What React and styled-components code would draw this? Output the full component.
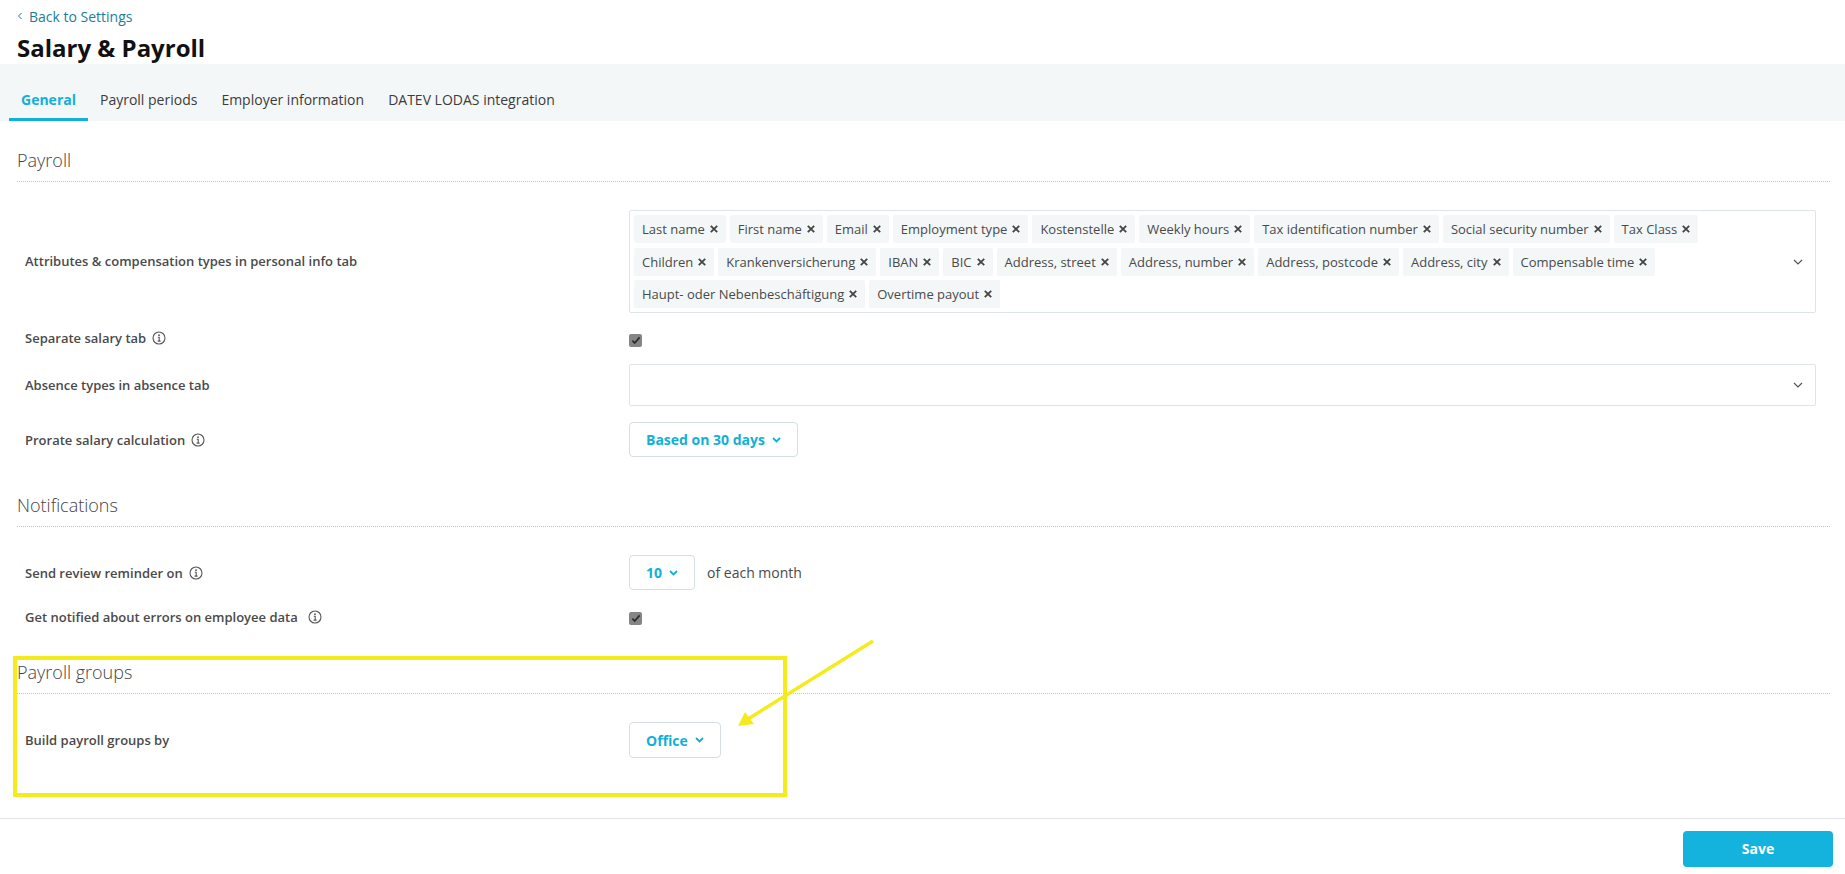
import React from "react";
import styled, { createGlobalStyle } from "styled-components";

const Global = createGlobalStyle`
  html, body { margin: 0; padding: 0; background: #fff; }
  body { font-family: "Open Sans", "Liberation Sans", sans-serif; color: #4a4a4a; }
  * { box-sizing: border-box; }
`;

const Page = styled.div`
  position: relative;
  height: 874px;
  display: flex;
  flex-direction: column;
  overflow: hidden;
`;
const BackLink = styled.a`
  height: 32px;
  padding-left: 17px;
  display: flex;
  align-items: center;
  gap: 6px;
  font-size: 14px;
  color: #1c7d9c;
`;
const Title = styled.h1`
  margin: 0;
  height: 32px;
  padding-left: 17px;
  font-size: 24px;
  line-height: 32px;
  font-weight: 700;
  color: #111;
`;
const TabBand = styled.div`
  height: 57px;
  background: #f3f7f8;
  padding: 15px 0 0 9px;
  display: flex;
`;
const Tab = styled.div`
  height: 42px;
  padding: 1px 12px 0;
  display: flex;
  align-items: center;
  font-size: 14px;
  font-weight: ${(p) => (p.$active ? 700 : 400)};
  color: ${(p) => (p.$active ? "#13afd8" : "#3c3c3c")};
  border-bottom: 3px solid ${(p) => (p.$active ? "#13afd8" : "transparent")};
`;
const SectionHeading = styled.h2`
  margin: ${(p) => p.$top}px 15px 0 17px;
  height: 42px;
  padding-bottom: 1px;
  display: flex;
  align-items: center;
  font-size: 18px;
  font-weight: 300;
  color: #444;
  border-bottom: 1px dotted #c4c4c4;
`;
const Rows = styled.div`
  margin-top: 28px;
  padding-left: 25px;
  padding-right: 29px;
  display: flex;
  flex-direction: column;
  gap: 16px;
`;
const Row = styled.div`
  display: grid;
  grid-template-columns: 604px 1fr;
  align-items: center;
  min-height: ${(p) => p.$h || 0}px;
`;
const Label = styled.div`
  display: flex;
  align-items: center;
  gap: ${(p) => p.$gap || 6}px;
  padding-bottom: ${(p) => (p.$flush ? 0 : 1)}px;
  font-size: 13px;
  font-weight: 600;
  color: #4a4a4a;
`;
const Control = styled.div`
  display: flex;
  align-items: center;
  gap: 12px;
  font-size: 14px;
`;
const MultiSelect = styled.div`
  position: relative;
  width: 100%;
  min-height: ${(p) => (p.$empty ? 42 : 103)}px;
  border: 1px solid #dde5e8;
  border-radius: 2px;
  padding: 4px 40px 4px 4px;
  display: flex;
  flex-wrap: wrap;
  gap: 4.5px 4px;
  align-content: flex-start;
`;
const Caret = styled.svg`
  position: absolute;
  right: 12px;
  top: 50%;
  margin-top: -4px;
  width: 10px;
  height: 8px;
`;
const Tag = styled.span`
  height: 28px;
  padding: 0 8px;
  display: inline-flex;
  align-items: center;
  gap: 5px;
  background: #f3f7f8;
  border-radius: 2px;
  font-size: 13px;
  color: #4a4a4a;
  white-space: nowrap;
`;
const Check = styled.span`
  width: 13px;
  height: 13px;
  margin-top: 3px;
  border-radius: 2px;
  background: #858585;
  display: flex;
  align-items: center;
  justify-content: center;
`;
const DropButton = styled.div`
  height: ${(p) => p.$h || 35}px;
  padding: 0 16px;
  display: inline-flex;
  align-items: center;
  gap: 7px;
  background: #fff;
  border: 1px solid #d7dfe2;
  border-radius: 4px;
  font-size: 14px;
  font-weight: 700;
  color: #13afd8;
`;
const Footer = styled.div`
  margin-top: auto;
  height: 56px;
  border-top: 1px solid #e2e6ea;
  padding: 12px 12px 0 0;
  display: flex;
  justify-content: flex-end;
`;
const SaveButton = styled.button`
  width: 150px;
  height: 36px;
  border: 0;
  border-radius: 4px;
  padding: 0 0 2px;
  background: #13b3de;
  color: #fff;
  font-family: inherit;
  font-size: 14px;
  font-weight: 700;
`;
const HighlightBox = styled.div`
  position: absolute;
  left: 13px;
  top: 656px;
  width: 774px;
  height: 141px;
  border: 4px solid #f4ea1c;
  pointer-events: none;
`;
const ArrowSvg = styled.svg`
  position: absolute;
  left: 730px;
  top: 635px;
  width: 150px;
  height: 100px;
  pointer-events: none;
`;

const X = () => (
  <svg width="8" height="8" viewBox="0 0 8 8">
    <path d="M0.8 0.8l6.4 6.4M7.2 0.8L0.8 7.2" stroke="#444" strokeWidth="1.8" fill="none" />
  </svg>
);
const Info = () => (
  <svg width="14" height="14" viewBox="0 0 14 14" fill="none">
    <circle cx="7" cy="7" r="6" stroke="#555" strokeWidth="1.1" />
    <circle cx="7" cy="4.2" r="0.9" fill="#555" />
    <path d="M5.8 6.3H7.2V10M5.6 10.1H8.6" stroke="#555" strokeWidth="1.1" />
  </svg>
);
const ThinCaret = () => (
  <Caret viewBox="0 0 10 8">
    <path d="M1 2l4 4 4-4" stroke="#555" strokeWidth="1.2" fill="none" />
  </Caret>
);
const BlueCaret = () => (
  <svg width="9" height="6" viewBox="0 0 9 6">
    <path d="M1 1l3.5 3.5L8 1" stroke="#13afd8" strokeWidth="1.8" fill="none" />
  </svg>
);
const Checked = () => (
  <Check>
    <svg width="10" height="9" viewBox="0 0 10 9">
      <path d="M1.4 4.6L3.7 7 8.6 1.4" stroke="#2a2a2a" strokeWidth="1.7" fill="none" />
    </svg>
  </Check>
);

const tags = [
  "Last name", "First name", "Email", "Employment type", "Kostenstelle", "Weekly hours",
  "Tax identification number", "Social security number", "Tax Class", "Children",
  "Krankenversicherung", "IBAN", "BIC", "Address, street", "Address, number", "Address, postcode",
  "Address, city", "Compensable time", "Haupt- oder Nebenbeschäftigung", "Overtime payout",
];

export default function App() {
  return (
    <Page>
      <Global />
      <BackLink>
        <svg width="6" height="8" viewBox="0 0 6 8">
          <path d="M4.5 1L1.5 4l3 3" stroke="#1c7d9c" strokeWidth="1" fill="none" />
        </svg>
        Back to Settings
      </BackLink>
      <Title>Salary &amp; Payroll</Title>
      <TabBand>
        <Tab $active>General</Tab>
        <Tab>Payroll periods</Tab>
        <Tab>Employer information</Tab>
        <Tab>DATEV LODAS integration</Tab>
      </TabBand>

      <SectionHeading $top={19}>Payroll</SectionHeading>
      <Rows>
        <Row>
          <Label>Attributes &amp; compensation types in personal info tab</Label>
          <Control>
            <MultiSelect>
              {tags.map((t) => (
                <Tag key={t}>{t}<X /></Tag>
              ))}
              <ThinCaret />
            </MultiSelect>
          </Control>
        </Row>
        <Row $h={19}>
          <Label>Separate salary tab <Info /></Label>
          <Control><Checked /></Control>
        </Row>
        <Row>
          <Label>Absence types in absence tab</Label>
          <Control><MultiSelect $empty><ThinCaret /></MultiSelect></Control>
        </Row>
        <Row>
          <Label $flush>Prorate salary calculation <Info /></Label>
          <Control><DropButton>Based on 30 days <BlueCaret /></DropButton></Control>
        </Row>
      </Rows>

      <SectionHeading $top={28}>Notifications</SectionHeading>
      <Rows>
        <Row>
          <Label $flush>Send review reminder on <Info /></Label>
          <Control><DropButton>10 <BlueCaret /></DropButton>of each month</Control>
        </Row>
        <Row $h={22}>
          <Label $gap={10}>Get notified about errors on employee data <Info /></Label>
          <Control><Checked /></Control>
        </Row>
      </Rows>

      <SectionHeading $top={24}>Payroll groups</SectionHeading>
      <Rows>
        <Row>
          <Label>Build payroll groups by</Label>
          <Control><DropButton $h={36}>Office <BlueCaret /></DropButton></Control>
        </Row>
      </Rows>

      <Footer><SaveButton>Save</SaveButton></Footer>

      <HighlightBox />
      <ArrowSvg viewBox="0 0 150 100">
        <path d="M143 6L18 84" stroke="#f4ea1c" strokeWidth="3.4" fill="none" />
        <path d="M8 91L15 77L24 89Z" fill="#f4ea1c" />
      </ArrowSvg>
    </Page>
  );
}
